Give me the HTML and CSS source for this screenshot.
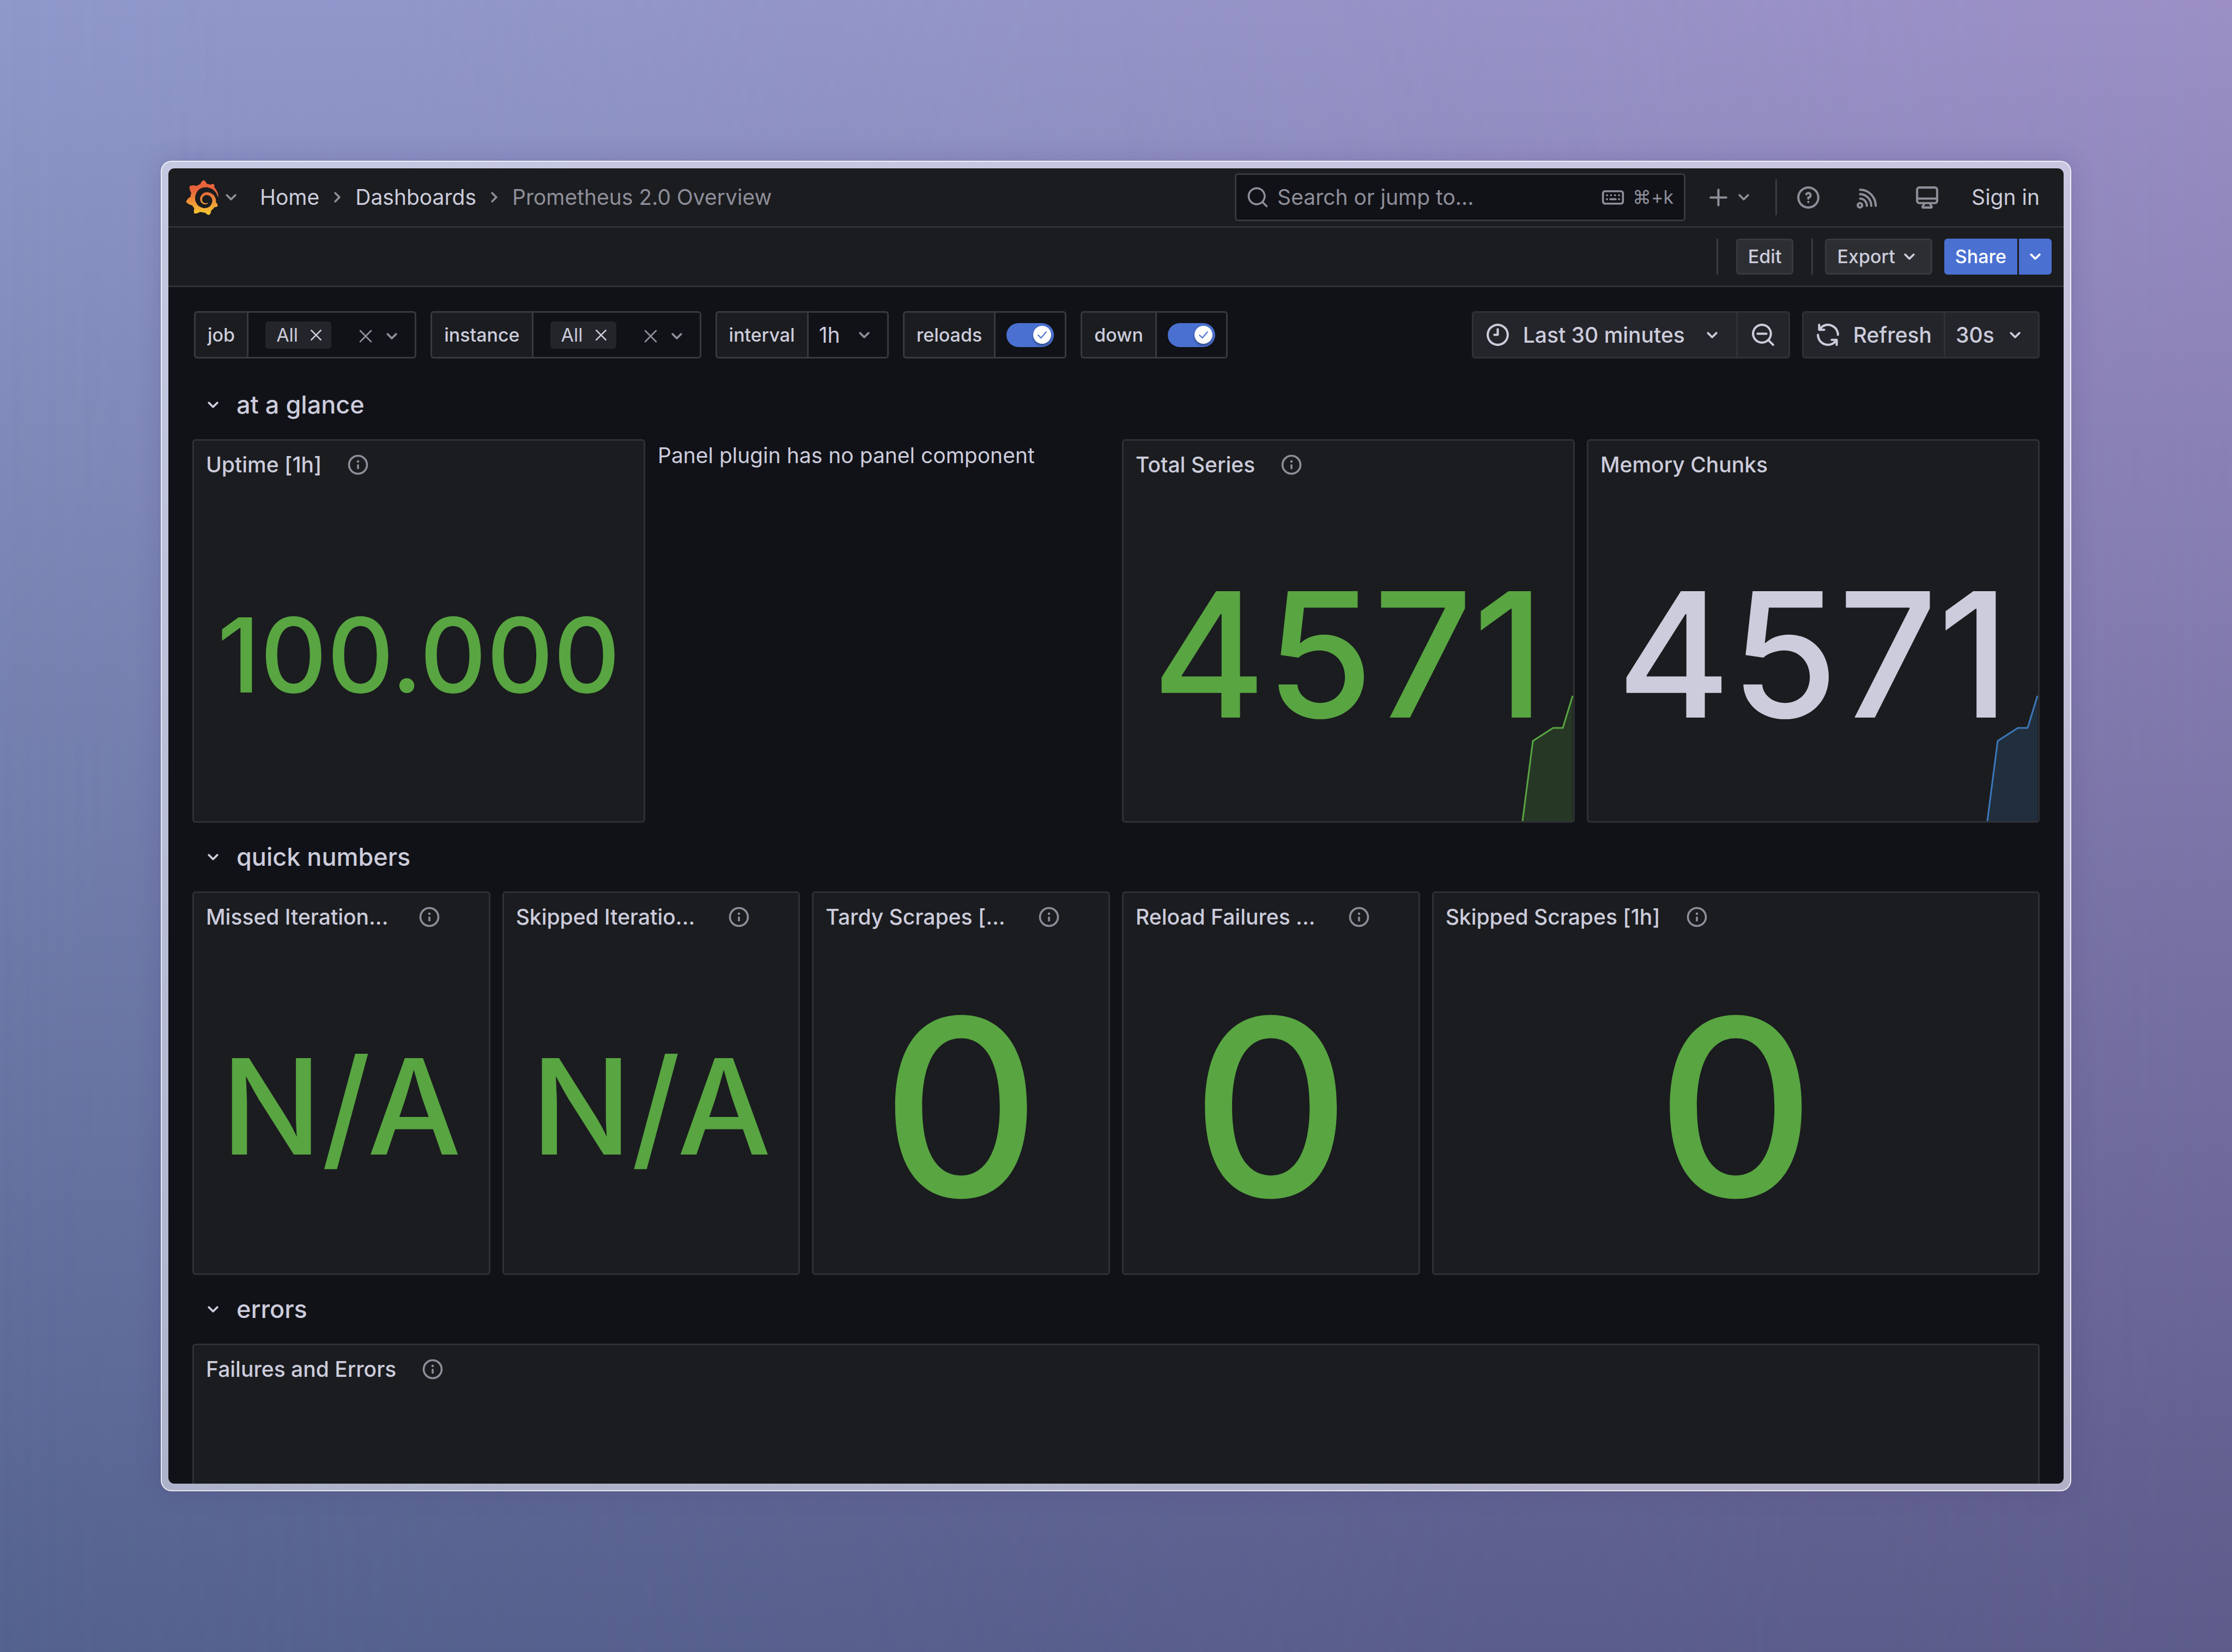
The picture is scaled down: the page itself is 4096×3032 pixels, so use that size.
FILE: index.html
```html
<!DOCTYPE html>
<html lang="en">
<head>
<meta charset="utf-8">
<meta name="viewport" content="width=device-width, initial-scale=1">
<title>Prometheus 2.0 Overview - Dashboards - Grafana</title>
<link rel="stylesheet" href="styles.css">
</head>
<body>
<svg class="sprite" aria-hidden="true">
  <symbol id="angle-down" viewBox="0 0 24 24"><path d="M17,9.17a1,1,0,0,0-1.41,0L12,12.71,8.46,9.17a1,1,0,0,0-1.41,0,1,1,0,0,0,0,1.42l4.24,4.24a1,1,0,0,0,1.42,0L17,10.59A1,1,0,0,0,17,9.17Z"/></symbol>
  <symbol id="angle-right" viewBox="0 0 24 24"><path d="M14.83,11.29,10.59,7.05a1,1,0,0,0-1.42,0,1,1,0,0,0,0,1.41L12.71,12,9.17,15.54a1,1,0,0,0,0,1.41,1,1,0,0,0,.71.29,1,1,0,0,0,.71-.29l4.24-4.24A1,1,0,0,0,14.83,11.29Z"/></symbol>
  <symbol id="times" viewBox="0 0 24 24"><path d="M13.41,12l6.3-6.29a1,1,0,1,0-1.42-1.42L12,10.59,5.71,4.29A1,1,0,0,0,4.29,5.71L10.59,12l-6.3,6.29a1,1,0,0,0,0,1.42,1,1,0,0,0,1.42,0L12,13.41l6.29,6.3a1,1,0,0,0,1.42,0,1,1,0,0,0,0-1.42Z"/></symbol>
  <symbol id="plus" viewBox="0 0 24 24"><path d="M19,11H13V5a1,1,0,0,0-2,0v6H5a1,1,0,0,0,0,2h6v6a1,1,0,0,0,2,0V13h6a1,1,0,0,0,0-2Z"/></symbol>
  <symbol id="search" viewBox="0 0 24 24"><path d="M21.71,20.29,18,16.61A9,9,0,1,0,16.61,18l3.68,3.68a1,1,0,0,0,1.42,0A1,1,0,0,0,21.71,20.29ZM11,18a7,7,0,1,1,7-7A7,7,0,0,1,11,18Z"/></symbol>
  <symbol id="search-minus" viewBox="0 0 24 24"><path d="M21.71,20.29,18,16.61A9,9,0,1,0,16.61,18l3.68,3.68a1,1,0,0,0,1.42,0A1,1,0,0,0,21.71,20.29ZM11,18a7,7,0,1,1,7-7A7,7,0,0,1,11,18ZM15,10H7a1,1,0,0,0,0,2h8a1,1,0,0,0,0-2Z"/></symbol>
  <symbol id="clock" viewBox="0 0 24 24"><path d="M12,2A10,10,0,1,0,22,12,10,10,0,0,0,12,2Zm0,18a8,8,0,1,1,8-8A8,8,0,0,1,12,20ZM12,6a1,1,0,0,0-1,1v4H9a1,1,0,0,0,0,2h3a1,1,0,0,0,1-1V7A1,1,0,0,0,12,6Z"/></symbol>
  <symbol id="sync" viewBox="0 0 24 24"><path d="M19.91,15.51H15.38a1,1,0,0,0,0,2h2.4A8,8,0,0,1,4,12a1,1,0,0,0-2,0,10,10,0,0,0,16.88,7.23V21a1,1,0,0,0,2,0V16.5A1,1,0,0,0,19.91,15.51ZM12,2A10,10,0,0,0,5.12,4.77V3a1,1,0,0,0-2,0V7.5a1,1,0,0,0,1,1h4.5a1,1,0,0,0,0-2H6.22A8,8,0,0,1,20,12a1,1,0,0,0,2,0A10,10,0,0,0,12,2Z"/></symbol>
  <symbol id="question" viewBox="0 0 24 24"><path d="M11.29,15.29a1.58,1.58,0,0,0-.12.15.76.76,0,0,0-.09.18.64.64,0,0,0-.06.18,1.36,1.36,0,0,0,0,.2.84.84,0,0,0,.08.38.9.9,0,0,0,.54.54.94.94,0,0,0,.76,0,.9.9,0,0,0,.54-.54A1,1,0,0,0,13,16a1,1,0,0,0-.29-.71A1,1,0,0,0,11.29,15.29ZM12,2A10,10,0,1,0,22,12,10,10,0,0,0,12,2Zm0,18a8,8,0,1,1,8-8A8,8,0,0,1,12,20ZM12,7A3,3,0,0,0,9.4,8.5a1,1,0,1,0,1.73,1A1,1,0,0,1,12,9a1,1,0,0,1,0,2,1,1,0,0,0-1,1v1a1,1,0,0,0,2,0v-.18A3,3,0,0,0,12,7Z"/></symbol>
  <symbol id="info" viewBox="0 0 24 24"><path d="M12,2A10,10,0,1,0,22,12,10,10,0,0,0,12,2Zm0,18a8,8,0,1,1,8-8A8,8,0,0,1,12,20Zm0-8.5a1,1,0,0,0-1,1v3a1,1,0,0,0,2,0v-3A1,1,0,0,0,12,11.5Zm0-4a1.25,1.25,0,1,0,1.25,1.25A1.25,1.25,0,0,0,12,7.5Z"/></symbol>
  <symbol id="rss" viewBox="0 0 24 24"><g fill="none" stroke="currentColor" stroke-width="2" stroke-linecap="round"><circle cx="5" cy="19" r="2"/><path d="M5.200 5A14 14.500 0 0 1 19.200 19.500M5.200 9A10 10.500 0 0 1 15.200 19.500M5.200 13A6 6.500 0 0 1 11.200 19.500"/></g></symbol>
  <symbol id="monitor" viewBox="0 0 24 24"><g fill="none" stroke="currentColor" stroke-width="2" stroke-linejoin="round"><rect x="3" y="3" width="18" height="14" rx="2"/><path d="M3 13H21M9.500 17.500 7.800 20.300 8.200 21H15.800L16.200 20.300 14.500 17.500"/></g></symbol>
  <symbol id="keyboard" viewBox="0 0 24 24"><g fill="none" stroke="currentColor" stroke-width="2" stroke-linecap="round"><rect x="2" y="6" width="20" height="12.400" rx="2"/><path d="M6 10H6.100M10 10H10.100M14 10H14.100M18 10H18.100M6 14H6.100M9.400 14H14.700M18 14H18.100"/></g></symbol>
  <symbol id="check" viewBox="0 0 24 24"><path d="M5 12.500 10 17.500 19 7" fill="none" stroke="currentColor" stroke-width="2" stroke-linecap="round" stroke-linejoin="round"/></symbol>
</svg>

<div class="window">
  <header class="topbar">
    <a class="logo" href="#" aria-label="Grafana">
      <svg class="logo-mark" viewBox="0 0 351 365"><defs><linearGradient id="flame" gradientUnits="userSpaceOnUse" x1="175" y1="445" x2="175" y2="114"><stop offset="0" stop-color="#f9ed32"/><stop offset="1" stop-color="#e8643a"/></linearGradient></defs><path fill="url(#flame)" d="M342,161.2c-0.6-6.1-1.6-13.1-3.6-20.9c-2-7.700-5-16.200-9.400-25c-4.400-8.800-10.100-17.900-17.500-26.800c-2.900-3.500-6.100-6.900-9.500-10.200c5.100-20.300-6.200-37.900-6.200-37.900c-19.500-1.200-31.900,6.100-36.500,9.400c-0.800-0.300-1.500-0.700-2.300-1c-3.300-1.300-6.700-2.600-10.300-3.700c-3.500-1.100-7.100-2.100-10.800-3c-3.700-0.900-7.400-1.600-11.200-2.200c-0.700-0.100-1.300-0.200-2-0.300c-8.500-27.200-32.900-38.600-32.900-38.600c-27.300,17.300-32.400,41.500-32.400,41.500s-0.100,0.500-0.300,1.400c-1.500,0.400-3,0.900-4.500,1.300c-2.100,0.600-4.200,1.400-6.200,2.200c-2.100,0.800-4.100,1.600-6.200,2.500c-4.100,1.800-8.200,3.800-12.200,6c-3.900,2.200-7.700,4.600-11.400,7.100c-0.500-0.200-1-0.400-1-0.400c-37.800-14.400-71.300,2.900-71.300,2.900c-3.100,40.200,15.100,65.500,18.700,70.100c-0.900,2.500-1.700,5-2.500,7.500c-2.800,9.100-4.900,18.400-6.200,28.100c-0.200,1.400-0.400,2.800-0.500,4.200C18.800,192.700,8.500,228,8.500,228c29.100,33.500,63.100,35.600,63.100,35.600c0,0,0.100-0.100,0.100-0.100c4.300,7.700,9.300,15,14.900,21.900c2.400,2.900,4.800,5.600,7.400,8.300c-10.600,30.400,1.500,55.600,1.500,55.600c32.400,1.200,53.700-14.200,58.200-17.700c3.200,1.100,6.500,2.100,9.800,2.900c10,2.600,20.200,4.100,30.400,4.500c2.500,0.100,5.100,0.200,7.600,0.100l1.200,0l0.800,0l1.600,0l1.600-0.100l0,0.100c15.300,21.800,42.100,24.900,42.100,24.900c19.100-20.100,20.200-40.100,20.200-44.400l0,0c0,0,0-0.100,0-0.300c0-0.400,0-0.600,0-0.600l0,0c0-0.300,0-0.600,0-0.900c4-2.800,7.800-5.800,11.400-9.100c7.600-6.900,14.300-14.800,19.900-23.300c0.500-0.800,1-1.600,1.500-2.400c21.600,1.200,36.900-13.400,36.900-13.400c-3.600-22.500-16.400-33.500-19.100-35.600l0,0c0,0-0.100-0.100-0.300-0.200c-0.200-0.100-0.200-0.200-0.200-0.200c0,0,0,0,0,0c-0.100-0.100-0.300-0.200-0.500-0.300c0.100-1.400,0.200-2.700,0.300-4.100c0.200-2.400,0.200-4.900,0.200-7.300l0-1.800l0-0.900l0-0.500c0-0.600,0-0.400,0-0.600l-0.100-1.500l-0.100-2c0-0.700-0.100-1.300-0.200-1.900c-0.100-0.600-0.100-1.300-0.200-1.900l-0.200-1.900l-0.300-1.900c-0.400-2.500-0.800-4.900-1.400-7.400c-2.300-9.700-6.100-18.900-11-27.200c-5-8.300-11.200-15.600-18.300-21.800c-7-6.200-14.900-11.200-23.100-14.900c-8.300-3.700-16.900-6.100-25.500-7.200c-4.300-0.600-8.600-0.800-12.900-0.700l-1.600,0l-0.400,0c-0.100,0-0.600,0-0.500,0l-0.700,0l-1.600,0.100c-0.600,0-1.200,0.100-1.700,0.100c-2.200,0.200-4.400,0.500-6.500,0.900c-8.600,1.600-16.700,4.700-23.800,9c-7.100,4.300-13.300,9.600-18.300,15.600c-5,6-8.900,12.700-11.600,19.600c-2.700,6.900-4.200,14.100-4.600,21c-0.100,1.700-0.100,3.500-0.100,5.200c0,0.400,0,0.900,0,1.300l0.100,1.400c0.100,0.800,0.100,1.700,0.200,2.500c0.300,3.500,1,6.900,1.900,10.100c1.900,6.500,4.900,12.400,8.600,17.400c3.700,5,8.200,9.100,12.900,12.400c4.700,3.200,9.800,5.500,14.800,7c5,1.500,10,2.100,14.700,2.100c0.600,0,1.200,0,1.700,0c0.300,0,0.600,0,0.900,0c0.300,0,0.600,0,0.900-0.100c0.500,0,1-0.100,1.500-0.100c0.100,0,0.300,0,0.400-0.100l0.500-0.100c0.300,0,0.600-0.100,0.900-0.100c0.600-0.100,1.100-0.200,1.700-0.300c0.600-0.100,1.100-0.200,1.600-0.400c1.100-0.200,2.100-0.600,3.100-0.900c2-0.700,4-1.500,5.700-2.400c1.800-0.900,3.400-2,5-3c0.400-0.300,0.900-0.600,1.300-1c1.600-1.300,1.900-3.700,0.600-5.300c-1.100-1.400-3.100-1.800-4.700-0.900c-0.400,0.200-0.800,0.400-1.200,0.600c-1.400,0.700-2.800,1.300-4.300,1.800c-1.500,0.500-3.100,0.900-4.700,1.200c-0.800,0.100-1.600,0.200-2.500,0.300c-0.400,0-0.800,0.100-1.300,0.100c-0.400,0-0.900,0-1.200,0c-0.400,0-0.800,0-1.200,0c-0.500,0-1,0-1.500-0.100l-0.600-0.100c-0.200,0-0.500,0-0.700-0.100c-0.500-0.100-0.900-0.100-1.400-0.200c-3.700-0.500-7.400-1.600-10.900-3.200c-3.600-1.600-7-3.800-10.100-6.600c-3.100-2.800-5.800-6.100-7.900-9.900c-2.100-3.800-3.600-8-4.300-12.400c-0.300-2.200-0.500-4.500-0.400-6.700c0-0.600,0.100-1.200,0.100-1.800l0-0.800c0-0.300,0.100-0.600,0.100-0.900c0.100-1.200,0.300-2.400,0.500-3.600c1.700-9.600,6.500-19,13.900-26.100c1.900-1.800,3.900-3.400,6-4.900c2.100-1.500,4.400-2.800,6.800-3.900c2.400-1.100,4.800-2,7.400-2.700c2.500-0.700,5.100-1.100,7.800-1.400c1.300-0.100,2.600-0.200,4-0.200c0.400,0,0.600,0,0.900,0l1.100,0l0.700,0l0.400,0l1.100,0.100c2.900,0.200,5.700,0.600,8.500,1.300c5.600,1.200,11.100,3.300,16.200,6.100c10.200,5.700,18.900,14.500,24.200,25.100c2.700,5.300,4.600,11,5.500,16.900c0.200,1.500,0.400,3,0.500,4.500l0.100,1.100l0.100,1.100c0,0.400,0,0.800,0,1.100c0,0.400,0,0.800,0,1.100l0,1l0,1.100c0,0.700-0.100,1.900-0.100,2.600c-0.100,1.600-0.300,3.300-0.500,4.900c-0.200,1.600-0.500,3.200-0.800,4.800c-0.300,1.600-0.700,3.200-1.100,4.700c-0.800,3.100-1.800,6.200-3,9.300c-2.400,6-5.600,11.800-9.400,17.100c-7.700,10.600-18.200,19.200-30.200,24.700c-6,2.700-12.300,4.700-18.800,5.700c-3.200,0.600-6.500,0.900-9.800,1l-0.600,0l-0.500,0l-1.100,0l-1.600,0l-0.800,0l-0.400,0c-1.800,0-3.500-0.100-5.300-0.300c-7-0.500-13.900-1.800-20.700-3.700c-6.700-1.900-13.200-4.600-19.400-7.800c-12.300-6.600-23.400-15.600-32-26.500c-4.300-5.400-8.100-11.300-11.200-17.400c-3.100-6.100-5.600-12.600-7.400-19.100c-1.800-6.600-2.900-13.300-3.400-20.100l-0.100-1.300l0-0.300l0-0.300l0-0.600l0-1.100l0-0.300l0-0.400l0-0.800l0-1.600l0-0.300l0-0.700c0-0.800,0-1.700,0-2.500c0.100-3.300,0.400-6.800,0.800-10.200c0.400-3.400,1-6.900,1.700-10.300c0.700-3.400,1.500-6.800,2.500-10.200c1.900-6.700,4.300-13.200,7.100-19.300c5.700-12.200,13.100-23.100,22-31.800c2.200-2.200,4.500-4.200,6.900-6.200c2.400-1.900,4.900-3.700,7.500-5.400c2.500-1.700,5.200-3.200,7.900-4.600c1.300-0.700,2.700-1.400,4.100-2c0.700-0.300,1.400-0.600,2.100-0.900c0.700-0.300,1.400-0.600,2.100-0.900c2.800-1.200,5.700-2.200,8.700-3.100c0.700-0.200,1.500-0.400,2.200-0.700c0.700-0.200,1.500-0.400,2.200-0.600c1.500-0.400,3-0.800,4.500-1.100c0.700-0.200,1.500-0.300,2.300-0.500c0.800-0.200,1.500-0.300,2.300-0.500c0.800-0.100,1.500-0.300,2.300-0.400l1.100-0.200l1.200-0.200c0.800-0.100,1.500-0.200,2.300-0.300c0.900-0.100,1.700-0.200,2.600-0.300c0.700-0.100,1.900-0.200,2.600-0.300c0.500-0.100,1.100-0.100,1.600-0.200l1.100-0.100l0.500-0.100l0.600,0c0.900-0.100,1.700-0.100,2.600-0.200l1.300-0.100l0.400,0l0.600,0c0.700,0,1.500-0.100,2.200-0.100c2.900-0.100,5.900-0.100,8.800,0c5.800,0.200,11.500,0.900,17,1.900c11.100,2.100,21.500,5.600,31,10.300c9.500,4.600,17.900,10.300,25.300,16.500c0.500,0.400,0.900,0.800,1.400,1.200c0.400,0.400,0.900,0.800,1.300,1.200c0.900,0.800,1.700,1.600,2.600,2.400c0.900,0.800,1.700,1.600,2.500,2.400c0.800,0.800,1.600,1.600,2.400,2.500c3.100,3.300,6,6.600,8.600,10c5.200,6.700,9.400,13.500,12.700,19.900c0.200,0.400,0.400,0.800,0.600,1.200c0.200,0.400,0.400,0.800,0.600,1.200c0.400,0.800,0.800,1.600,1.100,2.400c0.400,0.800,0.700,1.500,1.100,2.300c0.300,0.800,0.700,1.500,1,2.300c1.200,3,2.400,5.900,3.300,8.600c1.500,4.400,2.600,8.300,3.500,11.700c0.300,1.400,1.600,2.300,3,2.100c1.500-0.100,2.600-1.300,2.600-2.800C342.600,170.400,342.500,166.100,342,161.2z"/></svg>
      <svg class="icon muted"><use href="#angle-down"/></svg>
    </a>
    <nav class="crumbs" aria-label="Breadcrumbs">
      <a href="#">Home</a>
      <svg class="icon"><use href="#angle-right"/></svg>
      <a href="#">Dashboards</a>
      <svg class="icon"><use href="#angle-right"/></svg>
      <span class="muted">Prometheus 2.0 Overview</span>
    </nav>
    <label class="search">
      <svg class="icon"><use href="#search"/></svg>
      <input type="search" placeholder="Search or jump to..." aria-label="Search or jump to">
      <span class="shortcut"><svg class="icon"><use href="#keyboard"/></svg><span>⌘+k</span></span>
    </label>
    <button class="add" type="button" aria-label="New"><svg class="icon-lg"><use href="#plus"/></svg><svg class="icon"><use href="#angle-down"/></svg></button>
    <span class="rule"></span>
    <div class="tools">
      <button type="button" aria-label="Help"><svg class="icon-lg"><use href="#question"/></svg></button>
      <button type="button" aria-label="News"><svg class="icon-lg"><use href="#rss"/></svg></button>
      <button type="button" aria-label="Kiosk mode"><svg class="icon-lg"><use href="#monitor"/></svg></button>
    </div>
    <a class="signin" href="#">Sign in</a>
  </header>

  <div class="actions">
    <span class="rule"></span>
    <button class="btn btn-edit" type="button">Edit</button>
    <span class="rule"></span>
    <button class="btn btn-export" type="button">Export<svg class="icon"><use href="#angle-down"/></svg></button>
    <div class="share">
      <button class="btn primary" type="button">Share</button>
      <button class="btn primary btn-arrow" type="button" aria-label="Share options"><svg class="icon"><use href="#angle-down"/></svg></button>
    </div>
  </div>

  <main class="dashboard">
    <div class="controls">
      <div class="variable">
        <span class="name">job</span>
        <div class="field multi">
          <span class="chip">All<button type="button" aria-label="Remove All"><svg class="icon-xs"><use href="#times"/></svg></button></span>
          <span class="indicators"><button type="button" aria-label="Clear job"><svg class="icon-sm"><use href="#times"/></svg></button><button type="button" aria-label="Open job"><svg class="icon"><use href="#angle-down"/></svg></button></span>
        </div>
      </div>
      <div class="variable">
        <span class="name">instance</span>
        <div class="field multi">
          <span class="chip">All<button type="button" aria-label="Remove All"><svg class="icon-xs"><use href="#times"/></svg></button></span>
          <span class="indicators"><button type="button" aria-label="Clear instance"><svg class="icon-sm"><use href="#times"/></svg></button><button type="button" aria-label="Open instance"><svg class="icon"><use href="#angle-down"/></svg></button></span>
        </div>
      </div>
      <div class="variable">
        <label class="name" for="interval">interval</label>
        <div class="field dropdown">
          <select id="interval"><option>1h</option></select>
          <svg class="icon muted"><use href="#angle-down"/></svg>
        </div>
      </div>
      <div class="variable">
        <label class="name" for="reloads">reloads</label>
        <div class="field toggle"><span class="switch"><input id="reloads" type="checkbox" checked><svg class="knob"><use href="#check"/></svg></span></div>
      </div>
      <div class="variable">
        <label class="name" for="down">down</label>
        <div class="field toggle"><span class="switch"><input id="down" type="checkbox" checked><svg class="knob"><use href="#check"/></svg></span></div>
      </div>
      <div class="group time">
        <button class="range" type="button"><svg class="icon-lg"><use href="#clock"/></svg><span>Last 30 minutes</span><svg class="icon"><use href="#angle-down"/></svg></button>
        <button class="zoom" type="button" aria-label="Zoom out time range"><svg class="icon-lg"><use href="#search-minus"/></svg></button>
      </div>
      <div class="group">
        <button class="refresh" type="button"><svg class="icon-lg"><use href="#sync"/></svg><span>Refresh</span></button>
        <div class="dropdown rate">
          <select aria-label="Refresh interval"><option>30s</option></select>
          <svg class="icon"><use href="#angle-down"/></svg>
        </div>
      </div>
    </div>

    <div class="grid">
      <button class="row-title" type="button"><svg class="icon"><use href="#angle-down"/></svg>at a glance</button>
      <section class="panel span-6">
        <header><h2>Uptime [1h]</h2><svg class="icon"><use href="#info"/></svg></header>
        <div class="value size-s">100.000</div>
      </section>
      <div class="message span-6">Panel plugin has no panel component</div>
      <section class="panel span-6">
        <header><h2>Total Series</h2><svg class="icon"><use href="#info"/></svg></header>
        <div class="value size-l">4571</div>
        <svg class="spark" viewBox="0 0 92 230"><path class="area" d="M0 230 19 83 56 59H74L92 0V230Z"/><path class="line" d="M0 230 19 83 56 59H74L92 0"/></svg>
      </section>
      <section class="panel span-6">
        <header><h2>Memory Chunks</h2></header>
        <div class="value size-l plain">4571</div>
        <svg class="spark blue" viewBox="0 0 92 230"><path class="area" d="M0 230 19 83 56 59H74L92 0V230Z"/><path class="line" d="M0 230 19 83 56 59H74L92 0"/></svg>
      </section>

      <button class="row-title" type="button"><svg class="icon"><use href="#angle-down"/></svg>quick numbers</button>
      <section class="panel span-4">
        <header><h2>Missed Iteration...</h2><svg class="icon"><use href="#info"/></svg></header>
        <div class="value size-m">N/A</div>
      </section>
      <section class="panel span-4">
        <header><h2>Skipped Iteratio...</h2><svg class="icon"><use href="#info"/></svg></header>
        <div class="value size-m">N/A</div>
      </section>
      <section class="panel span-4">
        <header><h2>Tardy Scrapes [...</h2><svg class="icon"><use href="#info"/></svg></header>
        <div class="value size-xl">0</div>
      </section>
      <section class="panel span-4">
        <header><h2>Reload Failures ...</h2><svg class="icon"><use href="#info"/></svg></header>
        <div class="value size-xl">0</div>
      </section>
      <section class="panel span-8">
        <header><h2>Skipped Scrapes [1h]</h2><svg class="icon"><use href="#info"/></svg></header>
        <div class="value size-xl">0</div>
      </section>

      <button class="row-title" type="button"><svg class="icon"><use href="#angle-down"/></svg>errors</button>
      <section class="panel span-24">
        <header><h2>Failures and Errors</h2><svg class="icon"><use href="#info"/></svg></header>
      </section>
    </div>
  </main>
</div>
</body>
</html>
```
FILE: styles.css
```css
:root {
  --canvas: #111217;
  --surface: #1b1c1f;
  --control: #24252a;
  --raised: #2d2e32;
  --line: #2f3034;
  --field-line: #38393f;
  --text: #ccccdc;
  --muted: #8e8e9a;
  --blue: #4a70d1;
  --green: #58a542;
}

* { box-sizing: border-box; }

body {
  margin: 0;
  height: 100vh;
  padding: 295px;
  display: flex;
  position: relative;
  background: linear-gradient(#8f99ca, #54628f);
  font: 400 39px/60px Inter, sans-serif;
  color: var(--text);
}

/* right-hand tint of the backdrop, faded in from the left edge */
body::before {
  content: "";
  position: absolute;
  inset: 0;
  background: linear-gradient(#9b8fc6, #5d5b8a);
  -webkit-mask-image: linear-gradient(to right, transparent, #000);
  mask-image: linear-gradient(to right, transparent, #000);
}

button, input, select {
  font: inherit;
  color: inherit;
  background: none;
  border: 0;
  margin: 0;
  padding: 0;
}

button { display: flex; align-items: center; justify-content: center; }
a { color: inherit; text-decoration: none; }
svg { display: block; flex: none; fill: currentColor; }

.sprite { position: absolute; width: 0; height: 0; }
.icon-xs { width: 30px; height: 30px; }
.icon-sm { width: 34px; height: 34px; }
.icon { width: 44px; height: 44px; }
.icon-lg { width: 49px; height: 49px; }
.muted { color: var(--muted); }

.window {
  position: relative;
  flex: 1;
  min-width: 0;
  display: flex;
  flex-direction: column;
  padding: 12px;
  border: 2px solid rgba(255, 255, 255, .7);
  border-radius: 20px;
  background: rgba(255, 255, 255, .5);
  box-shadow: 0 0 44px rgba(70, 50, 120, .22);
}

.topbar, .actions {
  flex: none;
  height: 109px;
  display: flex;
  align-items: center;
  background: var(--surface);
  border-bottom: 3px solid var(--line);
}

.topbar { padding: 0 44px 0 31px; border-radius: 11px 11px 0 0; }
.rule { width: 3px; height: 66px; background: #3a3b40; }

.logo { display: flex; align-items: center; }
.logo-mark { width: 62px; height: 65px; }

.crumbs { display: flex; align-items: center; gap: 11px; margin-left: 31px; }
.crumbs .icon { color: var(--muted); }

.search {
  width: 827px;
  height: 88px;
  margin-left: auto;
  padding: 0 19px 0 17px;
  display: flex;
  align-items: center;
  gap: 14px;
  background: var(--canvas);
  border: 3px solid var(--field-line);
  border-radius: 6px;
  color: var(--muted);
}
.search input { flex: 1; min-width: 0; height: 60px; outline: 0; appearance: none; }
.search input::placeholder { color: var(--muted); opacity: 1; }
.shortcut { display: flex; align-items: center; gap: 14px; font-size: 34px; }

.add { margin: 0 36px; color: var(--muted); }
.tools { display: flex; gap: 22px; margin-left: 14px; color: var(--muted); }
.tools button { width: 87px; height: 87px; }
.signin { margin-left: 38px; }

.actions { justify-content: flex-end; padding-right: 22px; }
.btn {
  height: 66px;
  padding: 0 19px;
  border: 3px solid #38393d;
  border-radius: 6px;
  background: var(--raised);
  font-size: 34px;
  font-weight: 500;
}
.btn-edit { margin: 0 33px; }
.btn-export { margin: 0 22px; padding: 0 17px 0 19px; gap: 4px; }
.btn.primary { padding: 0 17px; border-color: var(--blue); background: var(--blue); color: #fff; }
.share { display: flex; gap: 3px; }
.share .btn:first-child { border-radius: 6px 0 0 6px; }
.share .btn-arrow { padding: 0 5px; border-radius: 0 6px 6px 0; }

.dashboard {
  flex: 1;
  min-height: 0;
  overflow: hidden;
  padding: 44px;
  background: var(--canvas);
  border-radius: 0 0 11px 11px;
}

.controls { display: flex; gap: 26px; padding-left: 3px; }
.variable { display: flex; height: 87px; font-size: 34px; }
.name {
  padding: 0 22px;
  display: flex;
  align-items: center;
  background: var(--surface);
  border: 3px solid var(--field-line);
  border-right-width: 0;
  border-radius: 6px 0 0 6px;
  font-weight: 500;
}
.field {
  display: flex;
  align-items: center;
  border: 3px solid var(--field-line);
  border-radius: 0 6px 6px 0;
}
.multi { width: 311px; justify-content: space-between; padding: 0 20px 0 31px; }
.chip {
  height: 50px;
  padding: 0 13px 0 20px;
  display: flex;
  align-items: center;
  gap: 18px;
  background: var(--control);
  border-radius: 6px;
}
.indicators { display: flex; align-items: center; gap: 4px; padding-top: 5px; color: var(--muted); }
.indicators button:first-child { padding: 0 5px; }

.dropdown { position: relative; }
.dropdown select {
  width: 100%;
  height: 81px;
  padding-left: 19px;
  appearance: none;
  font-size: 39px;
  outline: 0;
}
.dropdown .icon { position: absolute; right: 20px; pointer-events: none; }
.field.dropdown { width: 150px; }

.toggle { padding: 0 20px; }
.switch { display: grid; align-items: center; }
.switch input {
  grid-area: 1 / 1;
  width: 87px;
  height: 44px;
  appearance: none;
  background: var(--blue);
  border-radius: 22px;
}
.knob {
  grid-area: 1 / 1;
  justify-self: end;
  position: relative;
  width: 33px;
  height: 33px;
  margin-right: 5px;
  padding: 4px;
  border-radius: 50%;
  background: #fff;
  color: var(--blue);
  box-shadow: 0 3px 4px rgba(0, 0, 0, .35);
  pointer-events: none;
}

.group {
  display: flex;
  height: 87px;
  background: var(--control);
  border: 3px solid #303136;
  border-radius: 6px;
  font-weight: 500;
}
.group > * + * { border-left: 3px solid #303136; }
.time { margin-left: auto; margin-right: -4px; }
.range { padding: 0 22px 0 20px; gap: 22px; }
.range .icon { margin-left: 6px; }
.zoom { width: 96px; }
.refresh { padding: 0 22px 0 20px; gap: 22px; }
.rate { display: flex; align-items: center; width: 173px; }

.grid {
  margin-top: 44px;
  display: grid;
  grid-template-columns: repeat(24, minmax(0, 1fr));
  column-gap: 22px;
  row-gap: 22px;
}
.row-title {
  grid-column: 1 / -1;
  justify-content: flex-start;
  height: 82px;
  padding-left: 16px;
  gap: 21px;
  font-size: 45px;
  font-weight: 500;
}
.span-4 { grid-column: span 4; }
.span-6 { grid-column: span 6; }
.span-8 { grid-column: span 8; }
.span-24 { grid-column: span 24; }

.panel {
  position: relative;
  height: 704px;
  display: flex;
  flex-direction: column;
  background: var(--surface);
  border: 3px solid var(--line);
  border-radius: 6px;
}
.panel header {
  flex: none;
  height: 87px;
  padding: 0 87px 0 22px;
  display: flex;
  align-items: center;
  gap: 45px;
}
.panel h2 {
  margin: 0;
  white-space: nowrap;
  font-size: 39px;
  font-weight: 500;
}
.panel.span-4 h2 { flex: 1; }
.panel header .icon { color: var(--muted); }

.value {
  flex: 1;
  display: flex;
  align-items: center;
  justify-content: center;
  color: var(--green);
  font-weight: 500;
  line-height: 1;
}
.plain { color: var(--text); }
.size-s { font-size: 190px; }
.size-m { font-size: 243px; }
.size-l { font-size: 319px; }
.size-xl { font-size: 452px; }

.spark { position: absolute; right: 1px; bottom: 0; width: 92px; height: 230px; overflow: visible; color: var(--green); }
.spark.blue { color: #3c78ba; }
.spark .area { opacity: .2; }
.spark .line { fill: none; stroke: currentColor; stroke-width: 3; }

.message { padding-left: 1px; }
```
